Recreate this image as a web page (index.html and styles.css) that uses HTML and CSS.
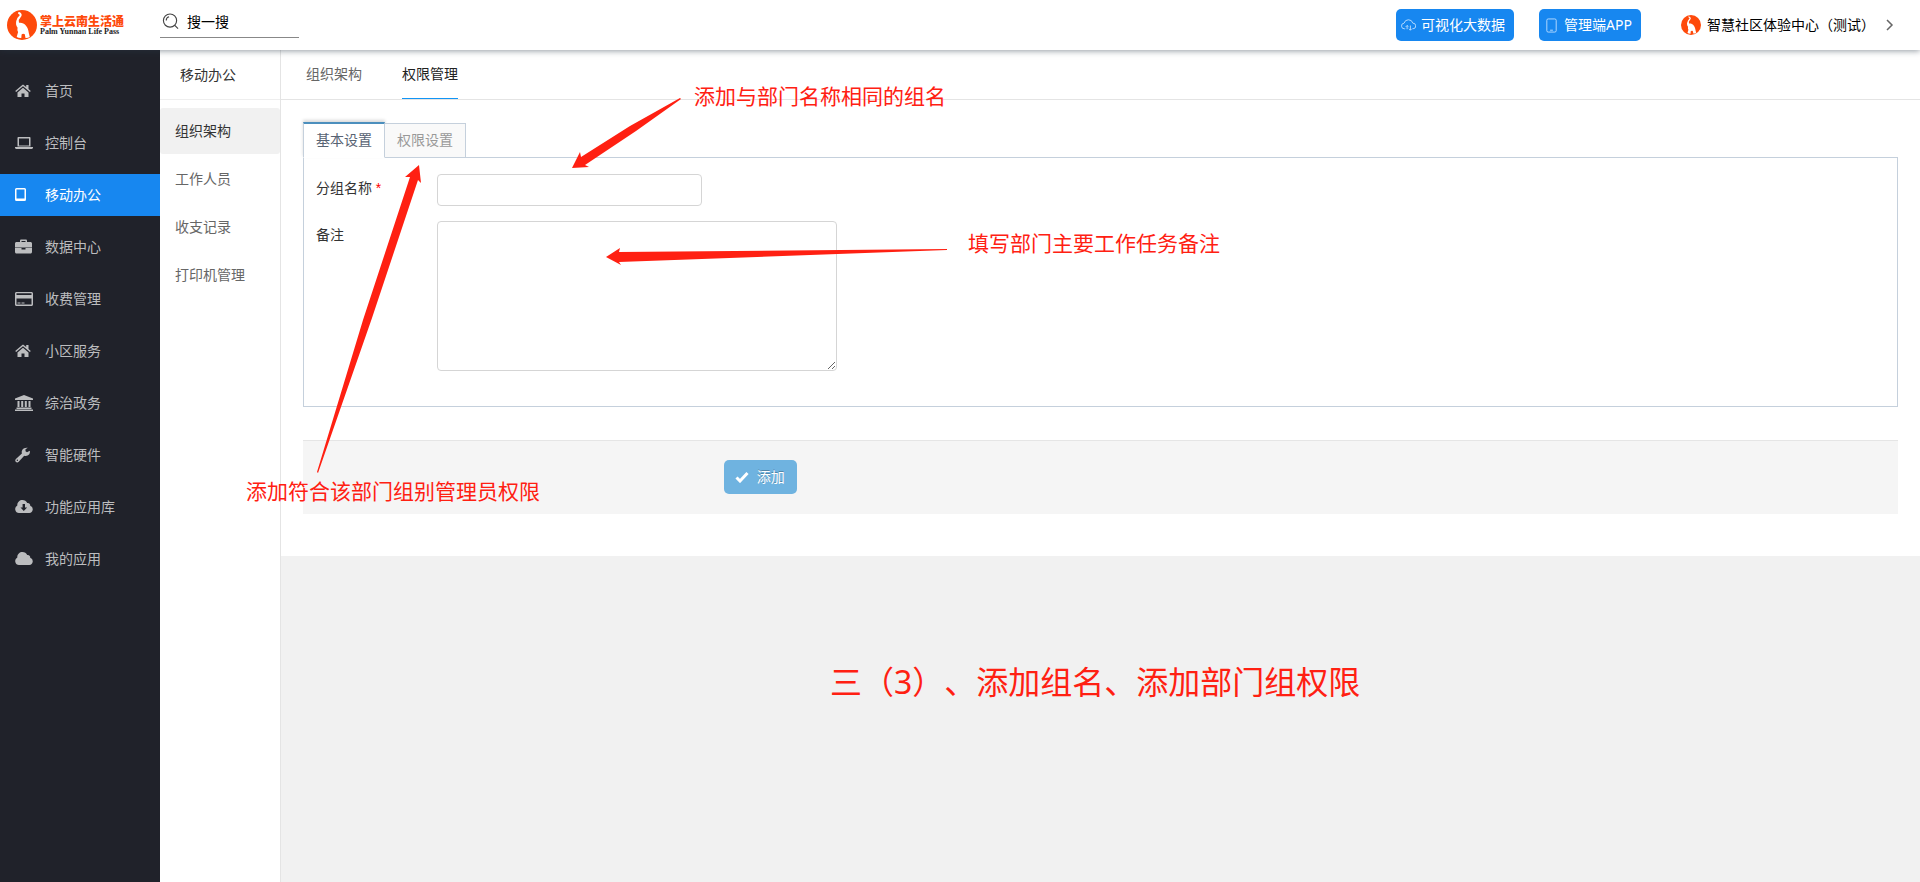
FILE: index.html
```
<!DOCTYPE html>
<html lang="zh-CN">
<head>
    <meta charset="UTF-8">
    <meta name="viewport" content="width=device-width, initial-scale=1.0">
    <title>权限管理</title>
    <link rel="stylesheet" href="styles.css">
</head>
<body>
    <!-- shared icons -->
    <svg class="sprite" aria-hidden="true">
        <symbol id="elephant" viewBox="0 0 30 30">
            <circle cx="15" cy="15" r="15" fill="#fe4a0b"/>
            <path fill="none" stroke="#fff" stroke-width="2" stroke-linecap="round" d="M12 3c2 .8 2.200 2.500.8 3.800-1.800 1.600-2.800 3-1.800 6"/>
            <path fill="#fff" d="M9.800 9.500c0 2 .9 3.200 2.700 3.300 2.500-.2 4.700.6 6.300 2.700 2 2.300 2.600 4.800 3 7.500l1 4c-1.500.8-2.800 1-4.300.9l-.7-3.600c-1-.9-2.500-.9-3.200.2l-.3 3.500c-1.500.2-3.200-.2-4.600-.9l1.400-5.100c-.8-1.200-.8-2.500-.5-4.200-1.600-2-2.200-5-.8-8.300z"/>
        </symbol>
        <symbol id="home" viewBox="0 0 16 16">
            <path d="M8 4.800 2.500 9.400V14h4v-3.500h3V14h4V9.400z"/>
            <path d="M15.800 8 13.500 6V2h-2.300v2.100L9 2.200c-.6-.5-1.400-.5-2 0L.2 8l.9 1L8 3.200 14.900 9z"/>
        </symbol>
    </svg>

    <header class="header">
        <a class="logo" href="#">
            <svg class="logo-mark" aria-hidden="true"><use href="#elephant"/></svg>
            <span class="logo-text">
                <span class="logo-name">掌上云南生活通</span>
                <span class="logo-sub">Palm Yunnan Life Pass</span>
            </span>
        </a>
        <label class="search">
            <svg class="search-icon" viewBox="0 0 18 18" aria-hidden="true">
                <circle cx="8.500" cy="8" r="7"/>
                <path d="M13.500 13l3.500 3.500M4.500 8a4 4 0 0 1 3-4"/>
            </svg>
            <input type="text" placeholder="搜一搜" aria-label="搜一搜">
        </label>
        <div class="header-right">
            <button class="top-btn" type="button">
                <svg viewBox="0 0 16 16" aria-hidden="true"><path d="M4.500 11.500H3.800a3 3 0 0 1-.5-6 4.800 4.800 0 0 1 9.300 0 3 3 0 0 1 .2 6h-.6M6.500 12V8M6.500 8 5 9.500M6.500 8 8 9.300M10 8v5M8.500 11.500 10 13l1.500-1.500"/></svg>
                <span>可视化大数据</span>
            </button>
            <button class="top-btn" type="button">
                <svg viewBox="0 0 16 16" aria-hidden="true"><rect x="3" y="1" width="10" height="14" rx="1.500"/><path d="M6.500 13h3"/></svg>
                <span>管理端APP</span>
            </button>
            <a class="user" href="#">
                <svg class="avatar" aria-hidden="true"><use href="#elephant"/></svg>
                <span>智慧社区体验中心（测试）</span>
                <svg class="chevron" viewBox="0 0 8 12" aria-hidden="true"><path d="M1 1l5 5-5 5"/></svg>
            </a>
        </div>
    </header>

    <div class="layout">
        <nav class="sidebar">
            <a href="#"><svg viewBox="0 0 16 16"><use href="#home"/></svg>首页</a>
            <a href="#"><svg class="wide" viewBox="0 0 18 16"><path fill-rule="evenodd" d="M3.500 2h11c.6 0 1 .4 1 1v8.500h-13V3c0-.6.400-1 1-1zM4 3.500v7h10v-7zM0 12h18v.8c0 .7-.6 1.200-1.300 1.200H1.300C.6 14 0 13.500 0 12.800z"/></svg>控制台</a>
            <a class="active" href="#"><svg viewBox="0 0 16 16"><path fill-rule="evenodd" d="M1.500 1h8A1.500 1.500 0 0 1 11 2.500v10A1.500 1.500 0 0 1 9.500 14h-8A1.500 1.500 0 0 1 0 12.500v-10A1.500 1.500 0 0 1 1.500 1zm0 1.500v9h8v-9z"/></svg>移动办公</a>
            <a href="#"><svg class="wide" viewBox="0 0 18 16"><path fill-rule="evenodd" d="M5 3V1.800C5 1 5.500.5 6.300.5h4.400c.8 0 1.300.5 1.300 1.300V3h3.500c.8 0 1.500.7 1.500 1.500V8.500H0V4.500C0 3.700.7 3 1.500 3zM6.500 3h4V2h-4zM0 9h6.500v1.500h4V9H17v4c0 .8-.7 1.500-1.500 1.500h-14C.7 14.500 0 13.800 0 13z"/></svg>数据中心</a>
            <a href="#"><svg class="wide" viewBox="0 0 18 16"><path fill-rule="evenodd" d="M1.500 1h15c.8 0 1.500.7 1.500 1.500v11c0 .8-.7 1.500-1.500 1.500h-15C.7 15 0 14.300 0 13.500v-11C0 1.700.7 1 1.500 1zm0 1.200v1.800h15V2.200zm0 5.300v6h15v-6zM2.500 11.500h3v1h-3zm4 0h3v1h-3z"/></svg>收费管理</a>
            <a href="#"><svg viewBox="0 0 16 16"><use href="#home"/></svg>小区服务</a>
            <a href="#"><svg class="wide" viewBox="0 0 18 16"><path d="M9 0l9 3.500V5H0V3.500zM2.500 6h2v6h-2zM6.200 6h2v6h-2zM9.800 6h2v6h-2zM13.500 6h2v6h-2zM1.500 12.500h15V14h-15zM0 14.500h18V16H0z"/></svg>综治政务</a>
            <a href="#"><svg viewBox="0 0 16 16"><path fill-rule="evenodd" d="M12.800.8 10.500 2.200v2l1.500 1 2.800-1.400c.7 2.900-1.500 5.300-4.100 5.200-.6 0-1-.1-1.500-.3l-5.500 6c-.8.9-2.200.9-2.900.1-.8-.7-.7-2 .1-2.800l6-5.600C6 3.300 8.300.2 12.800.8zM2.300 12.500a.7.700 0 1 0 .1 1.400.7.700 0 0 0-.1-1.400z"/></svg>智能硬件</a>
            <a href="#"><svg class="wide" viewBox="0 0 18 16"><path fill-rule="evenodd" d="M4 14a4 4 0 0 1-1.700-7.500C2.200 3 4.700 1 7.400 1c2.200 0 4 1.200 4.800 3 1.800-.4 3.300 1 3 2.800A3.700 3.700 0 0 1 14.300 14zM7.600 5v3.500H5.500L8.800 12l3.300-3.500H10V5z"/></svg>功能应用库</a>
            <a href="#"><svg class="wide" viewBox="0 0 18 16"><path d="M4 14a4 4 0 0 1-1.700-7.500C2.200 3 4.700 1 7.400 1c2.200 0 4 1.200 4.800 3 1.800-.4 3.300 1 3 2.800A3.700 3.700 0 0 1 14.300 14z"/></svg>我的应用</a>
        </nav>

        <nav class="submenu">
            <h2>移动办公</h2>
            <a class="active" href="#">组织架构</a>
            <a href="#">工作人员</a>
            <a href="#">收支记录</a>
            <a href="#">打印机管理</a>
        </nav>

        <main class="main">
            <div class="page">
                <nav class="page-tabs">
                    <a href="#">组织架构</a>
                    <a class="active" href="#">权限管理</a>
                </nav>

                <form class="group-form">
                    <div class="form-tabs">
                        <button class="active" type="button">基本设置</button>
                        <button type="button">权限设置</button>
                    </div>
                    <div class="panel">
                        <div class="form-group">
                            <label for="group-name">分组名称 <span class="required">*</span></label>
                            <input type="text" id="group-name" name="group_name">
                        </div>
                        <div class="form-group">
                            <label for="remark">备注</label>
                            <textarea id="remark" name="remark"></textarea>
                        </div>
                    </div>
                    <div class="form-actions">
                        <button class="submit" type="submit">
                            <svg viewBox="0 0 14 12" aria-hidden="true"><path d="M1.500 6.500l3.500 3.500 7.500-8"/></svg>
                            添加
                        </button>
                    </div>
                </form>
            </div>
        </main>
    </div>

    <!-- guide notes drawn over the page -->
    <div class="notes">
        <svg class="arrows" aria-hidden="true">
            <polygon points="572,168 580,152 581,157 630,126 680,98 681,99 636,131 585,165 589,167"/>
            <polygon points="606,257 620,248 619,252 947,249 947,250 619,262 621,265"/>
            <polygon points="419,165 405,177 410,177 363,320 317,472 318,473 372,318 418,180 421,183"/>
        </svg>
        <p class="note note-name">添加与部门名称相同的组名</p>
        <p class="note note-remark">填写部门主要工作任务备注</p>
        <p class="note note-rights">添加符合该部门组别管理员权限</p>
        <p class="note note-title">三（3）、添加组名、添加部门组权限</p>
    </div>
</body>
</html>
```
FILE: styles.css
```
* {
    box-sizing: border-box;
}
body {
    margin: 0;
    min-height: 100vh;
    display: flex;
    flex-direction: column;
    position: relative;
    background-color: #f1f1f1;
    color: #333;
    font-family: "Noto Sans", "Noto Sans CJK SC", sans-serif;
    font-size: 14px;
    line-height: 20px;
    text-spacing-trim: space-all;
}
a {
    color: inherit;
    text-decoration: none;
}
button, input, textarea {
    font: inherit;
}
button {
    cursor: pointer;
}
.sprite {
    position: absolute;
    width: 0;
    height: 0;
}

/* header */
.header {
    display: flex;
    align-items: center;
    height: 50px;
    background-color: #fff;
    box-shadow: 0 1px 6px rgba(40, 55, 70, 0.5);
    z-index: 1;
}
.logo {
    display: flex;
    align-items: center;
    gap: 3px;
    width: 160px;
    padding-left: 7px;
}
.logo-mark {
    width: 30px;
    height: 30px;
}
.logo-text {
    display: flex;
    flex-direction: column;
    gap: 1px;
}
.logo-name {
    color: #fe4a0b;
    font-size: 12px;
    font-weight: 900;
    line-height: 12px;
}
.logo-sub {
    color: #222;
    font-family: "Liberation Serif", serif;
    font-size: 8px;
    font-weight: bold;
    line-height: 6px;
}
.search {
    display: flex;
    align-items: center;
    gap: 8px;
    width: 139px;
    height: 32px;
    margin-bottom: 6px;
    padding: 0 2px;
    border-bottom: 1px solid #888;
}
.search-icon {
    flex: none;
    width: 17px;
    height: 17px;
    fill: none;
    stroke: #444;
    stroke-width: 1.2;
}
.search input {
    width: 100%;
    padding: 0;
    border: none;
    outline: none;
    background: none;
}
.search input::placeholder {
    color: #000;
}
.header-right {
    display: flex;
    align-items: center;
    gap: 25px;
    margin-left: auto;
    padding-right: 26px;
}
.top-btn {
    display: flex;
    align-items: center;
    gap: 5px;
    height: 32px;
    padding: 0 9px 0 5px;
    border: none;
    border-radius: 5px;
    background-color: #1787f0;
    color: #fff;
}
.top-btn svg {
    width: 15px;
    height: 15px;
    fill: none;
    stroke: #b9dcff;
}
.user {
    display: flex;
    align-items: center;
    gap: 6px;
    margin-left: 15px;
    color: #000;
}
.avatar {
    width: 20px;
    height: 20px;
}
.chevron {
    width: 8px;
    height: 12px;
    margin-left: 5px;
    fill: none;
    stroke: #666;
    stroke-width: 1.5;
}

/* columns */
.layout {
    display: flex;
    flex: 1;
}
.sidebar {
    display: flex;
    flex-direction: column;
    gap: 10px;
    width: 160px;
    padding-top: 20px;
    background-color: #20222a;
}
.sidebar a {
    display: flex;
    align-items: center;
    height: 42px;
    padding-left: 15px;
    color: #bcbdbf;
}
.sidebar a.active {
    background-color: #1787f0;
    color: #fff;
}
.sidebar svg {
    width: 16px;
    height: 16px;
    margin-right: 14px;
    fill: currentColor;
}
.sidebar svg.wide {
    width: 18px;
    margin-right: 12px;
}
.submenu {
    width: 121px;
    background-color: #fff;
    border-right: 1px solid #e4e4e4;
}
.submenu h2 {
    margin: 0 0 8px;
    padding: 15px 20px 14px;
    border-bottom: 1px solid #eee;
    font-size: 14px;
    font-weight: normal;
    line-height: 20px;
}
.submenu a {
    display: block;
    margin-bottom: 2px;
    padding: 13px 15px;
    border-radius: 3px;
    color: #666;
}
.submenu a.active {
    background-color: #f1f1f1;
    color: #333;
}

/* page */
.main {
    flex: 1;
}
.page {
    padding-bottom: 42px;
    background-color: #fff;
}
.page-tabs {
    display: flex;
    gap: 40px;
    height: 50px;
    padding-left: 25px;
    border-bottom: 1px solid #e4e4e4;
}
.page-tabs a {
    padding-top: 14px;
    color: #666;
}
.page-tabs a.active {
    border-bottom: 1px solid #1295f5;
    color: #222;
}
.group-form {
    padding: 22px 22px 0;
}
.form-tabs {
    display: flex;
    align-items: flex-end;
    margin-bottom: -1px;
    position: relative;
}
.form-tabs button {
    height: 35px;
    padding: 0 12px 2px;
    border: 1px solid #c5d0dc;
    border-left: none;
    background-color: #f9f9f9;
    color: #999;
}
.form-tabs button.active {
    height: 36px;
    border-left: 1px solid #c5d0dc;
    border-top: 2px solid #4c8fbd;
    border-bottom-color: #fff;
    background-color: #fff;
    color: #576373;
    box-shadow: 0 -2px 3px rgba(0, 0, 0, 0.15);
}
.panel {
    padding: 16px 12px 35px;
    border: 1px solid #c5d0dc;
}
.form-group {
    display: flex;
    margin-bottom: 15px;
}
.form-group:last-child {
    margin-bottom: 0;
}
.form-group label {
    width: 121px;
    padding-top: 4px;
}
.required {
    color: #f00;
    font-family: "Liberation Sans", sans-serif;
}
.form-group input, .form-group textarea {
    padding: 5px 8px;
    border: 1px solid #d5d5d5;
    border-radius: 4px;
    outline: none;
}
.form-group input {
    width: 265px;
    height: 32px;
}
.form-group textarea {
    width: 400px;
    height: 150px;
}
.form-actions {
    margin-top: 33px;
    padding: 19px 20px 20px;
    border-top: 1px solid #e5e5e5;
    background-color: #f5f5f5;
}
.submit {
    display: flex;
    align-items: center;
    gap: 8px;
    height: 34px;
    margin-left: calc(25% + 12px);
    padding: 0 12px 0 11px;
    border: none;
    border-radius: 5px;
    background-color: #6fb3e0;
    color: #fff;
    text-shadow: 0 -1px 0 rgba(0, 0, 0, 0.25);
}
.submit svg {
    width: 14px;
    height: 12px;
    fill: none;
    stroke: #fff;
    stroke-width: 3;
}

/* guide notes */
.notes {
    position: absolute;
    inset: 0;
    z-index: 2;
    pointer-events: none;
    color: #ff2012;
}
.arrows {
    width: 100%;
    height: 100%;
    fill: currentColor;
}
.note {
    position: absolute;
    margin: 0;
    font-size: 21px;
    line-height: 30px;
    white-space: nowrap;
}
.note-name {
    left: 694px;
    top: 81px;
}
.note-remark {
    left: 968px;
    top: 228px;
}
.note-rights {
    left: 246px;
    top: 476px;
}
.note-title {
    left: 830px;
    top: 658px;
    font-size: 32px;
    line-height: 48px;
}
```
